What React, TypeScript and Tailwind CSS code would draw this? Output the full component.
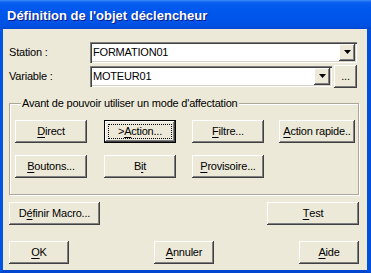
import type { ReactNode } from 'react'

const raised =
  'shadow-[inset_-1px_-1px_0_#404040,inset_1px_1px_0_#ffffff,inset_-2px_-2px_0_#808080]'
const sunken =
  'shadow-[inset_1px_1px_0_#808080,inset_2px_2px_0_#404040,inset_-1px_-1px_0_#ffffff,inset_-2px_-2px_0_#d4d0c8]'

const U = ({ children }: { children: ReactNode }) => (
  <span className="underline underline-offset-[2px] decoration-1">{children}</span>
)

const Btn = ({
  children,
  className = '',
  isDefault = false,
}: {
  children: ReactNode
  className?: string
  isDefault?: boolean
}) => {
  if (isDefault) {
    return (
      <div className={`h-[23px] flex border border-black bg-[#ece9d8] ${className}`}>
        <div className={`flex-1 flex p-[3px] ${raised}`}>
          <div className="flex-1 flex items-center justify-center border border-dotted border-black">
            {children}
          </div>
        </div>
      </div>
    )
  }
  return (
    <div className={`h-[23px] flex items-center justify-center bg-[#ece9d8] ${raised} ${className}`}>
      {children}
    </div>
  )
}

const Arrow = () => (
  <div className={`w-[16px] h-[17px] flex items-center justify-center bg-[#ece9d8] ${raised}`}>
    <svg width="7" height="4" viewBox="0 0 7 4" className="mb-[1px]">
      <path d="M0 0h7L3.5 4z" fill="#000" />
    </svg>
  </div>
)

const Combo = ({ value, className }: { value: string; className: string }) => (
  <div className={`h-[21px] flex items-center bg-white p-[2px] ${sunken} ${className}`}>
    <span className="flex-1 pl-[1px] leading-none">{value}</span>
    <Arrow />
  </div>
)

export default function App() {
  return (
    <div className="w-[371px] h-[273px] flex flex-col font-['Liberation_Sans',Arial,sans-serif] text-[11px] text-black bg-[#0054e3]">
      <div className="h-[29px] shrink-0 flex items-center pl-[7px] pt-[2px] bg-[linear-gradient(to_bottom,#3d8cf8_0%,#0c5ff0_8%,#0058ee_30%,#0054e8_70%,#0050e2_90%,#0046cc_100%)]">
        <span className="text-[13px] font-bold text-white [text-shadow:1px_1px_0_#0a1a8a]">
          Définition de l'objet déclencheur
        </span>
      </div>
      <div className="flex-1 flex border-l-[3px] border-r-[4px] border-b-[3px] border-l-[#0055e5] border-r-[#0050de] border-b-[#0046d0]">
        <div className="flex-1 flex flex-col bg-[#ece9d8] pl-[6px] pt-[13px] tracking-[-0.2px]">
          <div className="flex items-center h-[21px]">
            <span className="w-[81px]">Station :</span>
            <Combo value="FORMATION01" className="w-[267px]" />
          </div>
          <div className="flex items-center h-[21px] mt-[3px]">
            <span className="w-[81px]">Variable :</span>
            <Combo value="MOTEUR01" className="w-[242px]" />
            <Btn className="w-[23px] ml-[2px] h-[21px]">...</Btn>
          </div>

          <fieldset className="w-[350px] mt-[10px] border border-[#aca899] shadow-[inset_1px_1px_0_#ffffff,1px_1px_0_#ffffff] pl-[5px] pt-[10px] pb-[16px]">
            <legend className="ml-[6px] px-[1px] bg-[#ece9d8] leading-[13px]">
              Avant de pouvoir utiliser un mode d'affectation
            </legend>
            <div className="flex">
              <Btn className="w-[72px]">
                <U>D</U>irect
              </Btn>
              <Btn className="w-[72px] ml-[17px]" isDefault>
                &gt;<U>A</U>ction...
              </Btn>
              <Btn className="w-[72px] ml-[16px]">
                <U>F</U>iltre...
              </Btn>
              <Btn className="w-[76px] ml-[15px]">
                <U>A</U>ction rapide..
              </Btn>
            </div>
            <div className="flex mt-[12px]">
              <Btn className="w-[72px]">
                <U>B</U>outons...
              </Btn>
              <Btn className="w-[72px] ml-[17px]">
                B<U>i</U>t
              </Btn>
              <Btn className="w-[72px] ml-[16px]">
                <U>P</U>rovisoire...
              </Btn>
            </div>
          </fieldset>

          <div className="w-[350px] flex justify-between mt-[7px]">
            <Btn className="w-[91px]">
              D<U>é</U>finir Macro...
            </Btn>
            <Btn className="w-[92px]">
              <U>T</U>est
            </Btn>
          </div>

          <div className="w-[350px] flex justify-between mt-[16px]">
            <Btn className="w-[60px]">
              <U>O</U>K
            </Btn>
            <Btn className="w-[60px]">
              <U>A</U>nnuler
            </Btn>
            <Btn className="w-[60px]">
              <U>A</U>ide
            </Btn>
          </div>
        </div>
      </div>
    </div>
  )
}
